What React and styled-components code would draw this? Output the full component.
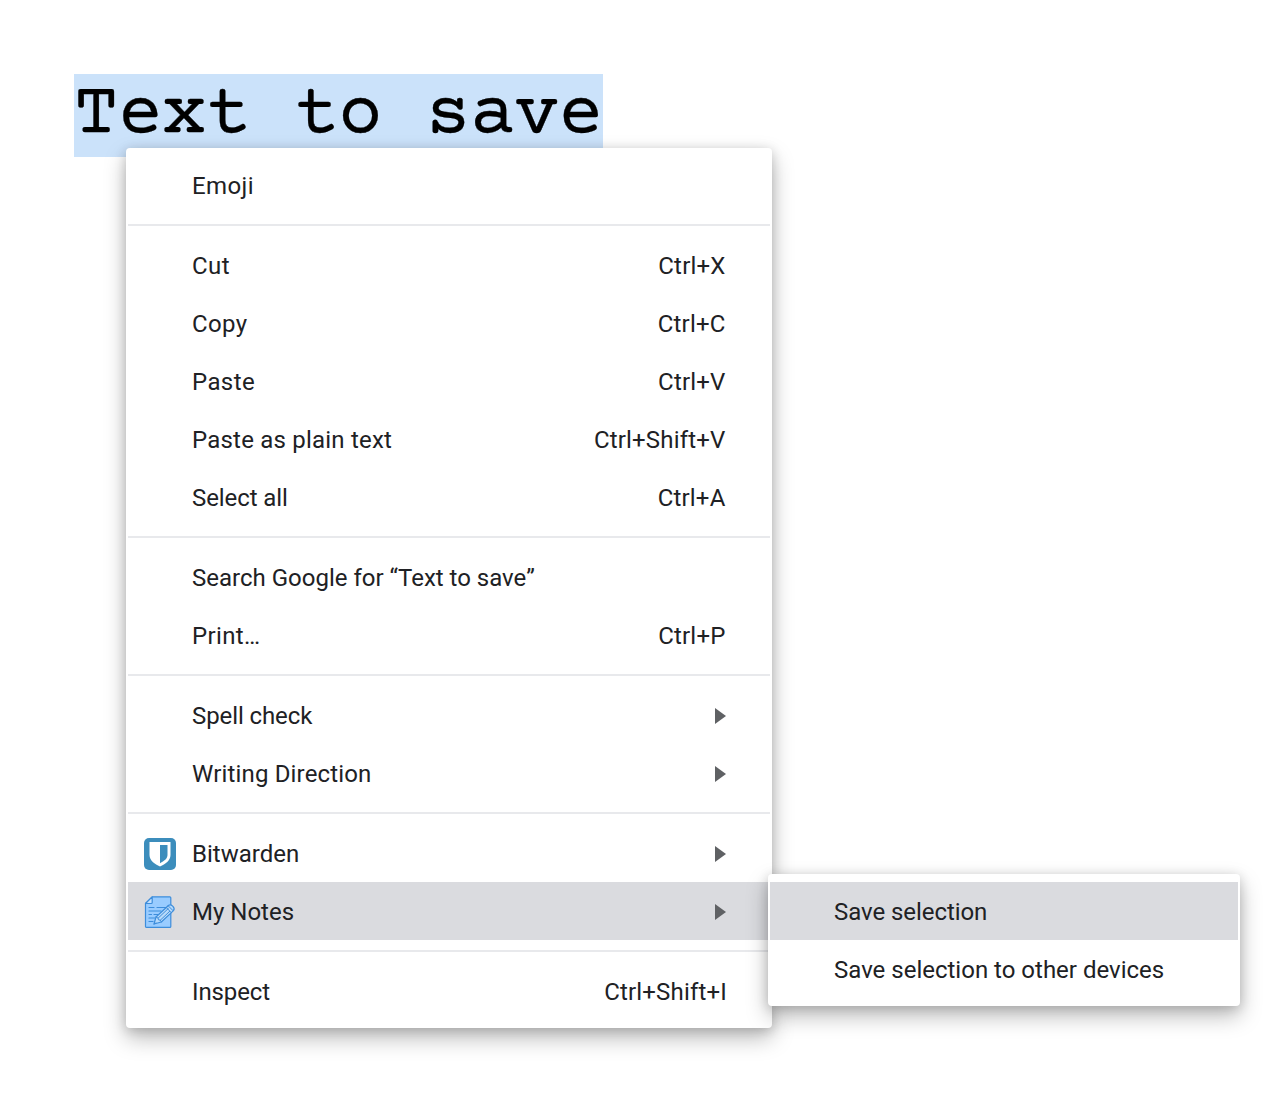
import React from "react";
import styled, { createGlobalStyle } from "styled-components";

const GlobalStyle = createGlobalStyle`
  body { margin: 0; background: #fff; }
  * { box-sizing: border-box; }
`;

const Page = styled.main`
  position: relative;
  width: 1280px;
  height: 1100px;
  overflow: hidden;
  padding: 74px;
  background: #fff;
  font-family: Roboto, "Liberation Sans", sans-serif;
`;

const Selection = styled.h1`
  margin: 0;
  width: 529px;
  height: 83px;
  background: #cbe2fa;
  color: #000;
  font: 400 74px/83px "Courier Prime", "Liberation Mono", monospace;
  letter-spacing: -0.33px;
  -webkit-text-stroke: 0.3px #000;
  white-space: pre;
`;

const Menu = styled.ul`
  position: absolute;
  left: ${(p) => p.$x}px;
  top: ${(p) => p.$y}px;
  width: ${(p) => p.$width}px;
  margin: 0;
  padding: 8px 2px;
  list-style: none;
  background: #fff;
  border-radius: 4px;
  box-shadow: 0 10px 22px rgba(0, 0, 0, 0.27), 0 2px 12px rgba(0, 0, 0, 0.16);
`;

const Item = styled.li`
  display: flex;
  align-items: center;
  height: 58px;
  padding: 2px 44px 0 0;
  background: ${(p) => (p.$active ? "#dadbdf" : "transparent")};
  color: #202124;
  font-size: 24px;
  line-height: 28px;
  white-space: nowrap;
`;

const IconSlot = styled.span`
  display: flex;
  width: 64px;
  padding-left: 16px;
  flex: none;
`;

const Label = styled.span`
  flex: 1;
  letter-spacing: ${(p) => p.$tracking || 0}px;
`;

const Shortcut = styled.span`
  margin-right: ${(p) => (p.$flush ? -1 : 0.5)}px;
  letter-spacing: 0.18px;
`;

const Arrow = styled.span`
  width: 0;
  height: 0;
  border: solid transparent;
  border-width: 8px 0 8px 11px;
  border-left-color: #5f6164;
`;

const Separator = styled.li`
  height: 2px;
  margin: 10px 0;
  background: #e8e9ec;
`;

const ShieldIcon = () => (
  <svg width="32" height="32" viewBox="0 0 32 32">
    <rect width="32" height="32" rx="5" fill="#3c8dbc" />
    <path d="M5.5 4h21v13c0 5.5-5.2 9-10.5 11.5C10.700 26 5.500 22.500 5.500 17z" fill="#fff" />
    <path d="M16 7h7.500v10c0 3.700-3.500 6-7.500 8.200z" fill="#3c8dbc" />
  </svg>
);

const NotesIcon = () => (
  <svg width="32" height="32" viewBox="0 0 32 32" fill="none" stroke="#3d8ddb" strokeWidth="1.200" strokeLinejoin="round" strokeLinecap="round">
    <path d="M8.200.8h17.600q1 0 1 1v28.600q0 1-1 1H2.500q-1 0-1-1V7.500z" fill="#99ccff" />
    <path d="M8.200.8v5.700q0 1-1 1H1.500z" fill="#c4e1ff" />
    <path d="M13 11.500h8.500M5 11.500h5M5 15h12M5 18.500h2.500M10 18.500h4M5 22h6M5 25.500h4" />
    <path d="M10 28l2-7L24.700 9.300q1.700-1.300 4 .8 2.400 2.400.8 4.500L17.300 26z" fill="#b8dafa" />
    <path d="M12 21l1.800.8.700 2 1.800.4 1 1.800M22.300 11.500l4.900 5.100M24.200 9.800l4.800 4.800M14.300 22l10-9.500M16.200 24.300l9.500-9M10 28l2-1" strokeWidth="1" />
  </svg>
);

const groups = [
  [{ label: "Emoji", tracking: 0.4 }],
  [
    { label: "Cut", shortcut: "Ctrl+X", tracking: 0.4 },
    { label: "Copy", shortcut: "Ctrl+C", tracking: 0.35 },
    { label: "Paste", shortcut: "Ctrl+V", tracking: 0.4 },
    { label: "Paste as plain text", shortcut: "Ctrl+Shift+V", tracking: 0.21 },
    { label: "Select all", shortcut: "Ctrl+A", tracking: -0.08 },
  ],
  [
    { label: "Search Google for “Text to save”" },
    { label: "Print…", shortcut: "Ctrl+P", tracking: 0.35 },
  ],
  [
    { label: "Spell check", arrow: true, tracking: -0.1 },
    { label: "Writing Direction", arrow: true, tracking: 0.16 },
  ],
  [
    { label: "Bitwarden", arrow: true, icon: <ShieldIcon /> },
    { label: "My Notes", arrow: true, icon: <NotesIcon />, active: true },
  ],
  [{ label: "Inspect", shortcut: "Ctrl+Shift+I", tracking: -0.12, flush: true }],
];

const submenu = [
  { label: "Save selection", active: true, tracking: -0.06 },
  { label: "Save selection to other devices" },
];

const MenuItem = ({ label, shortcut, arrow, icon, active, tracking, flush }) => (
  <Item $active={active}>
    <IconSlot>{icon}</IconSlot>
    <Label $tracking={tracking}>{label}</Label>
    {shortcut && <Shortcut $flush={flush}>{shortcut}</Shortcut>}
    {arrow && <Arrow />}
  </Item>
);

export default function App() {
  return (
    <Page>
      <GlobalStyle />
      <Selection>Text to save</Selection>
      <Menu $x={126} $y={148} $width={646}>
        {groups.map((group, i) => (
          <React.Fragment key={i}>
            {i > 0 && <Separator />}
            {group.map((item) => (
              <MenuItem key={item.label} {...item} />
            ))}
          </React.Fragment>
        ))}
      </Menu>
      <Menu $x={768} $y={874} $width={472}>
        {submenu.map((item) => (
          <MenuItem key={item.label} {...item} />
        ))}
      </Menu>
    </Page>
  );
}
